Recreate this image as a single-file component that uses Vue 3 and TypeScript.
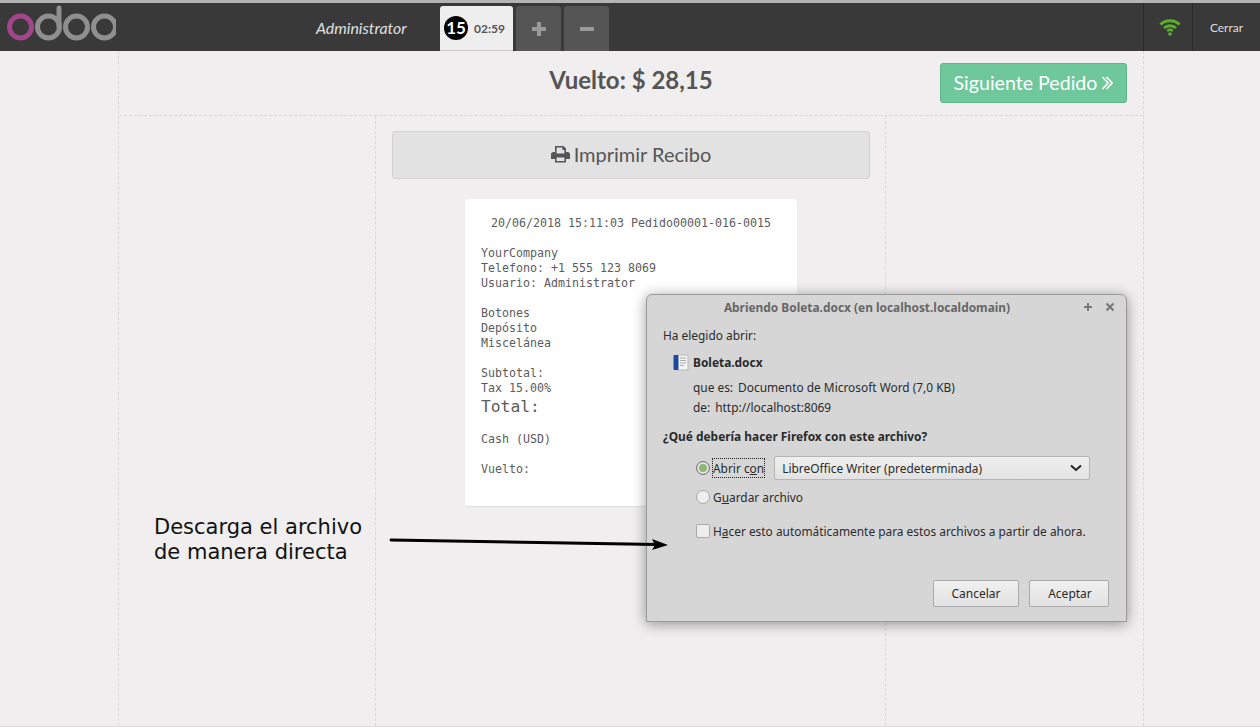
<script setup lang="ts">
const receiptBlocks: string[][] = [
  ['YourCompany', 'Telefono: +1 555 123 8069', 'Usuario: Administrator'],
  ['Botones', 'Depósito', 'Miscelánea'],
]
</script>

<template>
  <div class="pos">
    <header class="topbar">
      <svg class="logo" width="112" height="42" viewBox="0 0 112 42">
        <circle cx="16.500" cy="24" r="11" fill="none" stroke="#a24689" stroke-width="5" />
        <circle cx="44.500" cy="24" r="11" fill="none" stroke="#8f8f8f" stroke-width="5" />
        <path d="M55 24V5" fill="none" stroke="#8f8f8f" stroke-width="5" stroke-linecap="round" />
        <circle cx="72.500" cy="24" r="11" fill="none" stroke="#8f8f8f" stroke-width="5" />
        <circle cx="100.500" cy="24" r="11" fill="none" stroke="#8f8f8f" stroke-width="5" />
      </svg>
      <span class="user">Administrator</span>
      <div class="tabs">
        <div class="tab">
          <span class="seq">15</span>
          <span class="time">02:59</span>
        </div>
        <div class="tab-btn">
          <svg width="16" height="16" viewBox="0 0 16 16"><path d="M6 1h4v5h5v4h-5v5H6v-5H1V6h5z" fill="#999" /></svg>
        </div>
        <div class="tab-btn">
          <svg width="16" height="16" viewBox="0 0 16 16"><path d="M1 6h14v4H1z" fill="#999" /></svg>
        </div>
      </div>
      <div class="status wifi">
        <svg width="22" height="18" viewBox="0 0 22 18">
          <path d="M1.500 6.500a14 14 0 0 1 19 0" fill="none" stroke="#5bb02e" stroke-width="3" />
          <path d="M5 10a9 9 0 0 1 12 0" fill="none" stroke="#5bb02e" stroke-width="3" />
          <path d="M8.200 13a4.400 4.400 0 0 1 5.600 0" fill="none" stroke="#5bb02e" stroke-width="2.400" />
          <circle cx="11" cy="16" r="1.800" fill="#5bb02e" />
        </svg>
      </div>
      <div class="status close">Cerrar</div>
    </header>

    <main class="screen">
      <div class="top-row">
        <h1 class="change">Vuelto: $ 28,15</h1>
        <button class="next">
          Siguiente Pedido
          <svg width="12" height="16" viewBox="0 0 12 16">
            <path d="M1.500 2l5.500 6-5.500 6M5.500 2l5.500 6-5.500 6" fill="none" stroke="#fff" stroke-width="1.700" />
          </svg>
        </button>
      </div>
      <div class="body-row">
        <div class="side"></div>
        <div class="center">
          <button class="print">
            <svg width="19" height="18" viewBox="0 0 19 18">
              <path fill="#555" fill-rule="evenodd" d="M4 1h8.500L15 3.500V7h1.500A2.500 2.500 0 0 1 19 9.500V14h-4v3.500H4V14H0V9.500A2.500 2.500 0 0 1 2.500 7H4zm1.600 1.600V8.600h7.800V5h-2V2.600zm0 10V15.900h7.800V12.600z" />
            </svg>
            Imprimir Recibo
          </button>
          <section class="receipt">
            <div class="receipt-head">20/06/2018 15:11:03 Pedido00001-016-0015</div>
            <div v-for="(block, i) in receiptBlocks" :key="i" class="block">
              <div v-for="line in block" :key="line">{{ line }}</div>
            </div>
            <div class="block">
              <div>Subtotal:</div>
              <div>Tax 15.00%</div>
              <div class="total">Total:</div>
            </div>
            <div class="block"><div>Cash (USD)</div></div>
            <div class="block"><div>Vuelto:</div></div>
          </section>
        </div>
        <div class="side"></div>
      </div>
    </main>

    <div class="note">Descarga el archivo<br />de manera directa</div>

    <div class="dialog">
      <div class="dlg-title">
        <span class="dlg-title-text">Abriendo Boleta.docx (en localhost.localdomain)</span>
        <svg class="dlg-ctl" width="10" height="10" viewBox="0 0 10 10"><path d="M5 1v8M1 5h8" stroke="#777" stroke-width="2" /></svg>
        <svg class="dlg-ctl" width="10" height="10" viewBox="0 0 10 10"><path d="M1.500 1.500l7 7M8.500 1.500l-7 7" stroke="#777" stroke-width="2" /></svg>
      </div>
      <div class="dlg-body">
        <p class="chosen">Ha elegido abrir:</p>
        <div class="file">
          <svg width="16" height="17" viewBox="0 0 16 17">
            <rect x="3.500" y="1" width="11.500" height="15" fill="#f4f4f4" stroke="#b5b5b5" />
            <rect x="0.500" y="1" width="5" height="15" rx="1" fill="#1f4a9c" />
            <path d="M7 4h6M7 6.500h6M7 9h6M7 11.500h4" stroke="#aaa" />
          </svg>
          <strong>Boleta.docx</strong>
        </div>
        <div class="meta meta-type"><span>que es:</span><span>Documento de Microsoft Word (7,0 KB)</span></div>
        <div class="meta meta-from"><span>de:</span><span>http://localhost:8069</span></div>
        <p class="question">¿Qué debería hacer Firefox con este archivo?</p>
        <div class="options">
          <div class="opt opt-open">
            <span class="radio checked"></span>
            <span class="focus">Abrir c<u>o</u>n</span>
            <div class="select">
              <span>LibreOffice Writer (predeterminada)</span>
              <svg width="12" height="8" viewBox="0 0 12 8"><path d="M1 1.500l5 4.500 5-4.500" fill="none" stroke="#222" stroke-width="2" /></svg>
            </div>
          </div>
          <div class="opt opt-save">
            <span class="radio"></span>
            <span>G<u>u</u>ardar archivo</span>
          </div>
          <div class="opt opt-auto">
            <span class="check"></span>
            <span>H<u>a</u>cer esto automáticamente para estos archivos a partir de ahora.</span>
          </div>
        </div>
        <div class="actions">
          <button class="dlg-btn cancel">Cancelar</button>
          <button class="dlg-btn ok">Aceptar</button>
        </div>
      </div>
    </div>

    <svg class="arrow" width="282" height="16" viewBox="0 0 282 16">
      <path d="M2 3L268 7.500" stroke="#000" stroke-width="2.800" stroke-linecap="round" fill="none" />
      <path d="M263 2L279 8L263 13L266 8z" fill="#000" />
    </svg>
  </div>
</template>

<style>
html,
body {
  margin: 0;
  overflow: hidden;
}
</style>

<style scoped>
.pos {
  position: relative;
  height: 727px;
  display: flex;
  flex-direction: column;
  background: #f0eeee;
  font-family: Lato, sans-serif;
  color: #555;
  overflow: hidden;
  border-bottom: 1px solid #ddd;
  box-sizing: border-box;
}

.topbar {
  height: 51px;
  flex: none;
  box-sizing: border-box;
  border-top: 3px solid #b4b4b4;
  background: #393939;
  display: flex;
  color: #ddd;
}

.logo {
  margin: 0 0 0 4px;
  flex: none;
}

.user {
  margin-left: 200px;
  width: 124px;
  font-size: 15.900px;
  font-style: italic;
  line-height: 50px;
  color: #e0e0e0;
}

.tabs {
  display: flex;
  gap: 3px;
  padding-top: 3px;
  flex: 1;
}

.tab {
  width: 73px;
  box-sizing: border-box;
  background: #eee;
  border-bottom: 1px solid #c8c8c8;
  border-radius: 3px 3px 0 0;
  display: flex;
  align-items: center;
  padding-left: 4px;
  gap: 6px;
}

.seq {
  width: 24px;
  height: 24px;
  border-radius: 50%;
  background: #000;
  color: #fff;
  font-weight: 700;
  font-size: 17px;
  line-height: 24px;
  text-align: center;
}

.time {
  font-size: 12px;
  font-weight: 700;
  color: #555;
}

.tab-btn {
  width: 45px;
  background: #555;
  border-radius: 3px 3px 0 0;
  display: flex;
  align-items: center;
  justify-content: center;
}

.status {
  border-left: 1px solid #2a2a2a;
  display: flex;
  align-items: center;
  justify-content: center;
  height: 48px;
}

.wifi {
  width: 49px;
  box-sizing: border-box;
  padding-left: 4px;
}

.close {
  width: 68px;
  box-sizing: border-box;
  font-size: 12px;
  color: #ddd;
}

.screen {
  flex: 1;
  width: 1026px;
  margin-left: 118px;
  box-sizing: border-box;
  border-left: 1px dashed #d8d8d8;
  border-right: 1px dashed #d8d8d8;
  display: flex;
  flex-direction: column;
}

.top-row {
  height: 65px;
  flex: none;
  box-sizing: border-box;
  border-bottom: 1px dashed #d8d8d8;
  position: relative;
  display: flex;
  justify-content: flex-end;
  padding: 12px 16px 0 0;
}

.change {
  position: absolute;
  left: 0;
  right: 0;
  top: 14px;
  margin: 0;
  text-align: center;
  font-size: 24px;
  line-height: 30px;
  font-weight: 700;
  color: #555;
  pointer-events: none;
}

.next {
  width: 187px;
  height: 40px;
  box-sizing: border-box;
  background: #6ec89b;
  border: 1px solid #5fb48a;
  border-radius: 3px;
  color: #fff;
  font-family: inherit;
  font-size: 19.600px;
  padding: 0 0 2px;
  display: flex;
  align-items: center;
  justify-content: center;
  gap: 4px;
}

.next svg {
  margin-top: 2px;
}

.body-row {
  flex: 1;
  display: grid;
  grid-template-columns: 256px 511px 1fr;
}

.side {
  min-width: 0;
}

.center {
  border-left: 1px dashed #d8d8d8;
  border-right: 1px dashed #d8d8d8;
  padding: 15px 15px 0 16px;
  display: flex;
  flex-direction: column;
  align-items: center;
}

.print {
  width: 100%;
  height: 48px;
  flex: none;
  box-sizing: border-box;
  background: #e2e2e2;
  border: 1px solid #d3d3d3;
  border-radius: 3px;
  color: #555;
  font-family: inherit;
  font-size: 20px;
  padding: 0 0 2px;
  display: flex;
  align-items: center;
  justify-content: center;
  gap: 4px;
}

.receipt {
  margin-top: 20px;
  width: 332px;
  height: 308px;
  box-sizing: border-box;
  background: #fff;
  border-bottom: 1px solid #ddd;
  border-radius: 3px;
  padding: 17px 16px;
  font-family: 'DejaVu Sans Mono', monospace;
  font-size: 11.640px;
  line-height: 15px;
  color: #5c5c5c;
}

.receipt-head {
  text-align: center;
}

.block {
  margin-top: 15px;
}

.total {
  font-size: 16.300px;
  line-height: 21px;
}

.note {
  position: absolute;
  left: 154px;
  top: 515px;
  font-family: 'DejaVu Sans', sans-serif;
  font-size: 21px;
  line-height: 25px;
  color: #111;
}

.arrow {
  position: absolute;
  left: 389px;
  top: 537px;
}

.dialog {
  position: absolute;
  left: 646px;
  top: 294px;
  width: 481px;
  height: 328px;
  box-sizing: border-box;
  background: #d6d6d6;
  border: 1px solid #9a9a9a;
  border-radius: 6px 6px 0 0;
  box-shadow: 0 2px 14px rgba(0, 0, 0, 0.4);
  font-family: 'Noto Sans', sans-serif;
  font-size: 11.900px;
  color: #2a2a2a;
  display: flex;
  flex-direction: column;
}

.dlg-title {
  height: 24px;
  flex: none;
  display: flex;
  align-items: center;
  padding-right: 11px;
  gap: 12px;
}

.dlg-title-text {
  flex: 1;
  text-align: center;
  font-weight: 700;
  color: #666;
  padding-left: 16px;
}

.dlg-body {
  flex: 1;
  padding: 7px 17px 0 16px;
  display: flex;
  flex-direction: column;
}

.chosen {
  margin: 0;
  line-height: 18px;
}

.file {
  margin: 9px 0 0 10px;
  display: flex;
  align-items: center;
  gap: 4px;
  height: 18px;
}

.meta {
  display: flex;
  margin-left: 30px;
  line-height: 18px;
}

.meta-type {
  margin-top: 7px;
  gap: 5px;
}

.meta-from {
  margin-top: 2px;
  gap: 5px;
}

.question {
  margin: 11px 0 0;
  font-weight: 700;
  line-height: 18px;
}

.options {
  margin: 10px 0 0 33px;
  display: flex;
  flex-direction: column;
}

.opt {
  display: flex;
  align-items: center;
}

.opt-open {
  height: 25px;
}

.opt-save {
  margin-top: 7px;
  height: 19px;
}

.opt-auto {
  margin-top: 15px;
  height: 19px;
}

.radio {
  width: 12px;
  height: 12px;
  flex: none;
  border-radius: 50%;
  border: 1px solid #aaa;
  background: #eee;
  margin-right: 3px;
}

.radio.checked {
  background: #8fb878;
  border-color: #777;
  box-shadow: inset 0 0 0 2px #e4e4e4;
}

.check {
  width: 12px;
  height: 12px;
  flex: none;
  border-radius: 2px;
  border: 1px solid #aaa;
  background: #eee;
  margin-right: 3px;
}

.focus {
  outline: 1px dotted #222;
  padding: 0;
  line-height: 18px;
}

.select {
  margin-left: 10px;
  width: 316px;
  height: 24px;
  box-sizing: border-box;
  border: 1px solid #b5b5b5;
  border-radius: 2px;
  background: linear-gradient(#f0f0f0, #e2e2e2);
  display: flex;
  align-items: center;
  justify-content: space-between;
  padding: 0 7px;
}

.actions {
  margin-top: auto;
  padding-bottom: 14px;
  display: flex;
  justify-content: flex-end;
  gap: 10px;
}

.dlg-btn {
  height: 27px;
  box-sizing: border-box;
  border: 1px solid #aaa;
  border-radius: 2px;
  background: linear-gradient(#f0f0f0, #e2e2e2);
  font-family: inherit;
  font-size: 12px;
  color: #2a2a2a;
  padding: 0;
}

.cancel {
  width: 86px;
}

.ok {
  width: 80px;
  padding-left: 2px;
}
</style>
